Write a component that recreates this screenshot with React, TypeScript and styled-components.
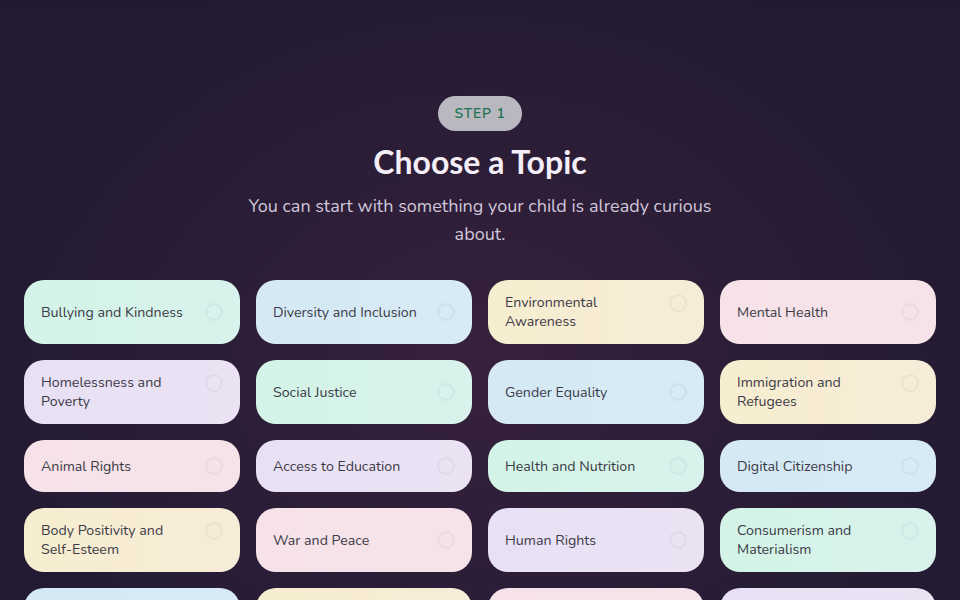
import * as React from 'react'
import styled, { createGlobalStyle } from 'styled-components'

const GlobalStyle = createGlobalStyle`
  html, body {
    margin: 0;
    padding: 0;
    background: #1e172c;
  }
  body {
    font-family: 'Nunito', 'Open Sans', 'Noto Sans', sans-serif;
    -webkit-font-smoothing: antialiased;
  }
`

const Page = styled.div`
  min-height: 600px;
  padding: 96px 24px 40px;
  box-sizing: border-box;
  background:
    radial-gradient(ellipse 520px 420px at 480px 360px, rgba(72, 38, 70, 0.55), rgba(72, 38, 70, 0) 100%),
    linear-gradient(180deg, #211a31 0%, #231b33 100%);
  display: flex;
  flex-direction: column;
  align-items: center;
`

const Badge = styled.div`
  height: 35px;
  padding: 0 16px;
  display: flex;
  align-items: center;
  border-radius: 18px;
  background: #b9b8c0;
  color: #1d7550;
  font-size: 14px;
  font-weight: 600;
  letter-spacing: 0.8px;
`

const Title = styled.h1`
  margin: 12px 0 0;
  font-family: 'Lato', 'Noto Sans', sans-serif;
  font-size: 32px;
  font-weight: 700;
  line-height: 38px;
  color: #f4eef8;
`

const Subtitle = styled.p`
  margin: 11px 0 0;
  max-width: 480px;
  text-align: center;
  font-size: 18px;
  line-height: 28px;
  color: #cfc7d9;
`

const Grid = styled.div`
  margin-top: 32px;
  width: 912px;
  display: grid;
  grid-template-columns: repeat(4, 1fr);
  gap: 16px;
`

const tones = [
  ['#d3f4e6', '#d9f2ec'],
  ['#d4e9f4', '#d8eaf5'],
  ['#f7edcf', '#f7ecd8'],
  ['#f6e2e8', '#f6e3ea'],
  ['#e8e0f4', '#ebe3f4'],
]

const Card = styled.button<{ $tone: number }>`
  all: unset;
  box-sizing: border-box;
  min-height: 52px;
  padding: 13px 17px;
  border-radius: 20px;
  background: linear-gradient(90deg, ${({ $tone }) => tones[$tone][0]}, ${({ $tone }) => tones[$tone][1]});
  display: flex;
  align-items: center;
  justify-content: space-between;
  gap: 12px;
  cursor: pointer;
`

const Label = styled.span`
  font-size: 14.2px;
  line-height: 19px;
  color: #3b3a47;
`

const Radio = styled.span<{ $top: boolean }>`
  flex: none;
  width: 14px;
  height: 14px;
  border-radius: 50%;
  border: 2px solid rgba(60, 60, 80, 0.06);
  align-self: ${({ $top }) => ($top ? 'flex-start' : 'center')};
  margin-top: ${({ $top }) => ($top ? '1px' : '0')};
`

const topics = [
  'Bullying and Kindness',
  'Diversity and Inclusion',
  'Environmental Awareness',
  'Mental Health',
  'Homelessness and Poverty',
  'Social Justice',
  'Gender Equality',
  'Immigration and Refugees',
  'Animal Rights',
  'Access to Education',
  'Health and Nutrition',
  'Digital Citizenship',
  'Body Positivity and Self-Esteem',
  'War and Peace',
  'Human Rights',
  'Consumerism and Materialism',
  'Climate Change',
  'Friendship and Belonging',
  'Technology and Privacy',
  'Community and Volunteering',
]

const twoLine = new Set([2, 4, 7, 12, 15, 17, 19])

export default function App() {
  const [picked, setPicked] = React.useState<number | null>(null)
  return (
    <>
      <GlobalStyle />
      <Page>
        <Badge>STEP 1</Badge>
        <Title>Choose a Topic</Title>
        <Subtitle>You can start with something your child is already curious about.</Subtitle>
        <Grid>
          {topics.map((t, i) => (
            <Card key={t} $tone={i % 5} onClick={() => setPicked(i)} aria-pressed={picked === i}>
              <Label>{t}</Label>
              <Radio $top={twoLine.has(i)} />
            </Card>
          ))}
        </Grid>
      </Page>
    </>
  )
}
